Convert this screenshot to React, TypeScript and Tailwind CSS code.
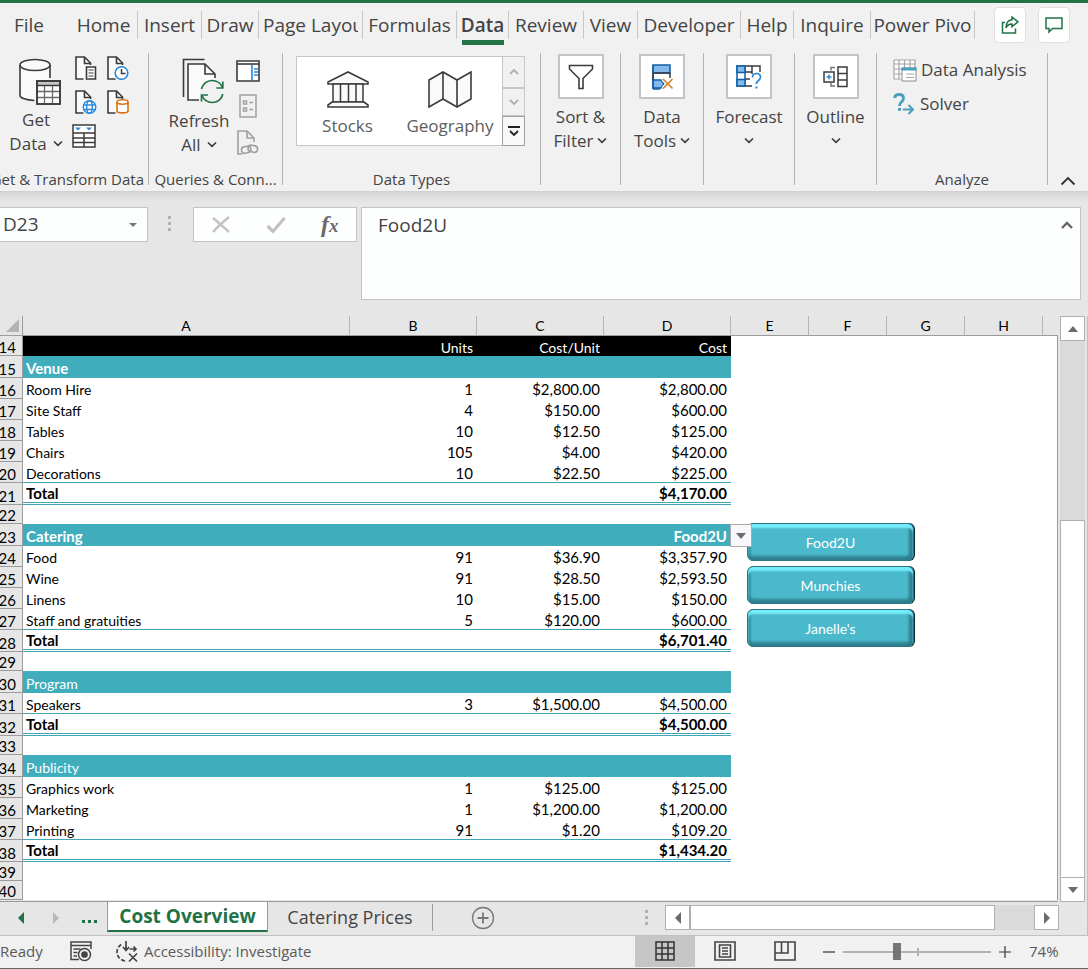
import type { ReactNode } from "react";

const INK = "#3b3b3b";
const BLUE = "#2b88d8";
const GREEN = "#217346";

/* ---------- icons ---------- */

function Chevron() {
  return (
    <svg width="10" height="8" viewBox="0 0 10 8" fill="none" stroke="#3b3b3b" strokeWidth="1.7" aria-hidden="true">
      <path d="M1 1.500l4 3.800 4-3.800" />
    </svg>
  );
}

function GetDataIcon() {
  return (
    <svg width="42" height="47" viewBox="0 0 42 47" fill="none" stroke={INK} strokeWidth="1.6" aria-hidden="true">
      <path d="M1 7v30c0 2.500 6 5 14 5.500H17V22H31V7z" fill="#fafafa" stroke="none" />
      <ellipse cx="16" cy="7" rx="15" ry="5.500" fill="#fafafa" />
      <path d="M1 7v30.500c0 2.500 6 4.800 14.500 5M31 7v13" />
      <path d="M18 23h23v23H18z" fill="#fff" />
      <path d="M18 23h23v4.500H18z" fill="#c8c6c4" />
      <path d="M18 33.500h23M18 39.500h23M25.500 28v18M33.500 28v18" stroke="#6b6965" strokeWidth="1.300" />
      <path d="M18 23h23v23H18z" />
    </svg>
  );
}

function DocBase({ color = INK }: { color?: string }) {
  return (
    <g stroke={color} strokeWidth="1.600" fill="none">
      <path d="M1 1h8l6 6v16H1z" fill="#fafafa" stroke="none" />
      <path d="M8.500 23H1V1h8.500l6 6v2" />
      <path d="M9.500 1v6.500h6.500" />
    </g>
  );
}

function DocText() {
  return (
    <svg width="22" height="24" viewBox="0 0 22 24" aria-hidden="true">
      <DocBase />
      <path d="M11.500 11h9v12h-9z" fill="#fff" stroke={INK} strokeWidth="1.600" />
      <path d="M13.500 14h5M13.500 17h5M13.500 20h5" stroke={INK} strokeWidth="1.200" />
    </svg>
  );
}

function DocClock() {
  return (
    <svg width="22" height="24" viewBox="0 0 22 24" aria-hidden="true">
      <DocBase />
      <circle cx="14.500" cy="17" r="6.300" fill="#fff" stroke={BLUE} strokeWidth="1.600" />
      <path d="M14.500 13v4.500h4" fill="none" stroke={INK} strokeWidth="1.500" />
    </svg>
  );
}

function DocGlobe() {
  return (
    <svg width="22" height="24" viewBox="0 0 22 24" aria-hidden="true">
      <DocBase />
      <g fill="none" stroke={BLUE} strokeWidth="1.400">
        <circle cx="14.500" cy="17" r="6.300" fill="#fff" />
        <ellipse cx="14.500" cy="17" rx="2.800" ry="6.300" />
        <path d="M8.500 15h12M8.500 19.500h12" />
      </g>
    </svg>
  );
}

function DocDatabase() {
  return (
    <svg width="22" height="24" viewBox="0 0 22 24" aria-hidden="true">
      <DocBase />
      <g fill="#fff" stroke="#d9730d" strokeWidth="1.600">
        <path d="M10 12v9c0 2.500 11 2.500 11 0v-9" />
        <ellipse cx="15.500" cy="12" rx="5.500" ry="2.200" />
      </g>
    </svg>
  );
}

function TableFilterIcon() {
  return (
    <svg width="24" height="24" viewBox="0 0 24 24" fill="none" stroke={INK} strokeWidth="1.500" aria-hidden="true">
      <path d="M1 1h22v22H1z" fill="#fff" />
      <path d="M1 9h22M1 14h22M1 18.500h22M12 9v14" />
      <path d="M3 3.500h6L6 6.500zM14 3.500h6l-3 3z" fill={BLUE} stroke="none" />
    </svg>
  );
}

function RefreshIcon() {
  return (
    <svg width="42" height="46" viewBox="0 0 42 46" fill="none" stroke={INK} strokeWidth="1.600" aria-hidden="true">
      <path d="M1.500 39V1.500h21" />
      <path d="M6 42V6h17l9.500 9.500V24L18 42z" fill="#fafafa" stroke="none" />
      <path d="M17 42H6V6h17l10 10v4" />
      <path d="M23 6v10h10" />
      <circle cx="30" cy="34" r="12.500" fill="#f1f1f1" stroke="none" />
      <g stroke={GREEN} strokeWidth="1.700">
        <path d="M19.500 31c1-5 5.500-8.500 10.500-8.500 4.500 0 8.500 2.500 10.500 7M40.800 36c-1 5-5.300 8.500-10.500 8.500-4.500 0-8.500-2.500-10.300-7" />
        <path d="M40.800 23.500v6.500h-6.500M19.500 43.500V37H26" />
      </g>
    </svg>
  );
}

function PaneIcon() {
  return (
    <svg width="24" height="22" viewBox="0 0 24 22" fill="none" stroke={INK} strokeWidth="1.600" aria-hidden="true">
      <path d="M1 1h22v20H1z" fill="#fff" />
      <path d="M1 4h22" />
      <path d="M16 5v15" stroke={BLUE} />
      <path d="M18 9h4M18 12h4M18 15h4" stroke={BLUE} strokeWidth="1.300" />
    </svg>
  );
}

function PropertiesIcon() {
  return (
    <svg width="18" height="24" viewBox="0 0 18 24" fill="none" stroke="#a0a0a0" strokeWidth="1.500" aria-hidden="true">
      <path d="M1 1h16v22H1z" />
      <path d="M4.500 7h3v3h-3zM4.500 14h3v3h-3zM10.500 8.500H14M10.500 15.500H14" />
    </svg>
  );
}

function LinkDocIcon() {
  return (
    <svg width="22" height="25" viewBox="0 0 22 25" fill="none" stroke="#a0a0a0" strokeWidth="1.600" aria-hidden="true">
      <path d="M5 24H1V1h9l7 7v4" />
      <path d="M10 1v7h7" />
      <rect x="4.500" y="16.500" width="9.500" height="6.500" rx="3.200" transform="rotate(-12 9 20)" />
      <rect x="11" y="15.500" width="9.500" height="6.500" rx="3.200" transform="rotate(12 16 19)" />
    </svg>
  );
}

function StocksIcon() {
  return (
    <svg width="42" height="37" viewBox="0 0 42 37" fill="#fafafa" stroke={INK} strokeWidth="1.600" aria-hidden="true">
      <path d="M1 13v-2L21 1l20 10v2z" />
      <path d="M6 13h30v18H6zM13.500 13v18M21.500 13v18M29 13v18" strokeWidth="1.500" />
      <path d="M1 36v-2l4-3h32l4 3v2z" />
    </svg>
  );
}

function MapIcon() {
  return (
    <svg width="44" height="37" viewBox="0 0 44 37" fill="#fafafa" stroke={INK} strokeWidth="1.600" aria-hidden="true">
      <path d="M1 9l14-8 14 8 14-8v27l-14 8-14-8-14 8z" />
      <path d="M15 1v27M29 9v27" />
    </svg>
  );
}

function FunnelIcon() {
  return (
    <svg width="26" height="26" viewBox="0 0 26 26" fill="#fff" stroke={INK} strokeWidth="1.600" aria-hidden="true">
      <path d="M1.500 1.500h23v3.500L15 14.500V24.500h-4V14.500L1.500 5z" />
    </svg>
  );
}

function DataToolsIcon() {
  return (
    <svg width="24" height="26" viewBox="0 0 24 26" fill="none" strokeWidth="1.500" aria-hidden="true">
      <path d="M3 1h17v8H3zM3 16h8l3 4-3 4H3z" fill="#83b9eb" stroke="#0f5ea8" />
      <path d="M3 1v24M3 25h7" stroke="#0f5ea8" />
      <path d="M3 9v7M20 9v5M3 9h17" stroke={INK} />
      <path d="M13 15l9.500 9.500M22.500 15L13 24.500" stroke="#fff" strokeWidth="4" />
      <path d="M13 15l9.500 9.500M22.500 15L13 24.500" stroke="#d9822b" strokeWidth="1.700" />
    </svg>
  );
}

function ForecastIcon() {
  return (
    <svg width="26" height="26" viewBox="0 0 26 26" fill="none" strokeWidth="1.500" aria-hidden="true">
      <path d="M9 2h15v6M9 8h7M9 15h5M9 22h7M16 2v8" stroke={INK} />
      <path d="M1 2h8v20H1z" fill="#fff" stroke="#0f5ea8" />
      <path d="M1 2h8v6.500H1zM1 15.500h8V22H1z" fill="#83b9eb" stroke="#0f5ea8" />
      <path d="M16.500 13.500c0-2.500 1.700-4 4-4s4 1.500 4 3.800c0 3.200-4.200 3.200-4.200 6.700" stroke={BLUE} strokeWidth="1.700" />
      <path d="M19.400 22.500h2v2h-2z" fill={BLUE} />
    </svg>
  );
}

function OutlineIcon() {
  return (
    <svg width="26" height="22" viewBox="0 0 26 22" fill="none" stroke={INK} strokeWidth="1.500" aria-hidden="true">
      <path d="M15 1h9v19.500h-9zM15 7.500h9M15 14h9" />
      <path d="M12 1.500H8v3M12 20H8v-3" stroke="#777" />
      <path d="M1 6h10v10H1z" />
      <path d="M6 8.500v5M3.500 11h5" stroke={BLUE} />
    </svg>
  );
}

function AnalysisIcon() {
  return (
    <svg width="24" height="23" viewBox="0 0 24 23" fill="none" aria-hidden="true">
      <path d="M1 1h21v19H1z" fill="#fff" />
      <path d="M1 1h21v8M1 1v19h7M1 5h21M1 10h8M1 15h8M6 1v19M11.500 1v8M17 1v8" stroke="#a5a5a5" strokeWidth="1.200" />
      <path d="M9 9h14v13H9z" fill="#fff" stroke="#8a8a8a" />
      <path d="M8.500 8.500h15v3h-15z" fill="#4a9fbd" />
      <path d="M13 15h8M13 18.500h8" stroke="#a5a5a5" />
    </svg>
  );
}

function SolverIcon() {
  return (
    <svg width="22" height="22" viewBox="0 0 22 22" fill="none" stroke="#4a9fbd" aria-hidden="true">
      <path d="M1.500 5c.4-2.300 2-3.500 4.500-3.500 2.800 0 4.500 1.400 4.500 3.700C10.500 9 6.500 8.500 6.500 13" strokeWidth="2.800" />
      <path d="M5 15h3v2.800H5z" fill="#4a9fbd" stroke="none" />
      <path d="M10 16.500h9M15.500 12l4.500 4.500-4.500 4.500" strokeWidth="2" />
    </svg>
  );
}

function Triangle({ dir, color = "#6b6b6b" }: { dir: "up" | "down" | "left" | "right"; color?: string }) {
  const d = {
    up: "M1 9l5-6 5 6z",
    down: "M1 3l5 6 5-6z",
    left: "M9 0v12L3 6z",
    right: "M3 0v12l6-6z",
  }[dir];
  return (
    <svg width="12" height="12" viewBox="0 0 12 12" fill={color} aria-hidden="true">
      <path d={d} />
    </svg>
  );
}

function Grip() {
  return (
    <span className="flex flex-col gap-[3px]" aria-hidden="true">
      <span className="size-[3px] bg-[#b0b0b0]" />
      <span className="size-[3px] bg-[#b0b0b0]" />
      <span className="size-[3px] bg-[#b0b0b0]" />
    </span>
  );
}

/* ---------- ribbon ---------- */

const tabs = [
  { name: "Insert", width: "w-[64px]" },
  { name: "Draw", width: "w-[57px]" },
  { name: "Page Layout", width: "w-[104px]" },
  { name: "Formulas", width: "w-[94px]" },
  { name: "Data", width: "w-[52px]" },
  { name: "Review", width: "w-[75px]" },
  { name: "View", width: "w-[54px]" },
  { name: "Developer", width: "w-[103px]" },
  { name: "Help", width: "w-[53px]" },
  { name: "Inquire", width: "w-[77px]" },
  { name: "Power Pivo", width: "w-[104px]" },
];

function TabItem({ name, width }: { name: string; width: string }) {
  const active = name === "Data";
  const clipped = name === "Page Layout";
  return (
    <div className={`${width} flex h-[42px] shrink-0 flex-col`}>
      <div className="mt-2 flex h-[28px] items-center justify-center border-r border-[#c8c6c4]">
        <button
          className={`whitespace-nowrap leading-7 ${active ? "font-semibold" : ""} ${
            clipped ? "ml-1 mr-1 flex-1 overflow-hidden text-left" : ""
          }`}
        >
          {name}
        </button>
      </div>
      {active && <span className="mx-[5px] mt-px h-[5px] bg-[#217346]" />}
    </div>
  );
}

function Group({ width, label, children }: { width: string; label?: string; children: ReactNode }) {
  return (
    <>
      <section className={`${width} flex h-[138px] shrink-0 flex-col`}>
        <div className="flex h-[116px] items-start">{children}</div>
        {label && <div className="flex justify-center whitespace-nowrap text-[15px] leading-5">{label}</div>}
      </section>
      <span className="h-[132px] w-px shrink-0 bg-[#b4b2b0]" />
    </>
  );
}

function MenuButton({ icon, top, bottom }: { icon: ReactNode; top: string; bottom?: string }) {
  return (
    <button className="flex flex-1 flex-col items-center leading-6">
      <span className="mb-[6px] mt-px flex h-[45px] w-[46px] items-center justify-center border-2 border-[#c4c4c4] bg-white">
        {icon}
      </span>
      <span>{top}</span>
      <span className="flex h-6 items-center gap-1">
        {bottom}
        <Chevron />
      </span>
    </button>
  );
}

function Ribbon() {
  return (
    <header className="border-b border-[#d0d0d0] bg-[#f1f1f1] text-[#444]">
      <div className="h-[3px] bg-[#217346]" />
      <nav className="flex h-[44px] text-[19px]">
        <div className="mt-2 h-[28px] w-[58px] text-center">
          <button className="leading-7">File</button>
        </div>
        <div className="ml-3 mt-2 h-[28px] w-[68px] border-r border-[#c8c6c4] text-center">
          <button className="leading-7">Home</button>
        </div>
        {tabs.map((t) => (
          <TabItem key={t.name} name={t.name} width={t.width} />
        ))}
        <div className="ml-auto mr-[18px] mt-1 flex gap-3">
          <button aria-label="Share" className="flex h-9 w-8 items-center justify-center rounded-sm border border-[#e0e0e0] bg-white">
            <svg width="18" height="18" viewBox="0 0 18 18" fill="none" stroke={GREEN} strokeWidth="1.500">
              <path d="M4 6.500H1.500V17h13v-4.500" />
              <path d="M11 1l6 4.800-6 4.800V8C8 8 6 9.500 5 12c0-5 2.500-8 6-8.300z" />
            </svg>
          </button>
          <button aria-label="Comments" className="flex h-9 w-8 items-center justify-center rounded-sm border border-[#e0e0e0] bg-white">
            <svg width="18" height="18" viewBox="0 0 18 18" fill="none" stroke={GREEN} strokeWidth="1.500">
              <path d="M1 2h16v10.500H7.500L4 16v-3.500H1z" />
            </svg>
          </button>
        </div>
      </nav>

      <div className="flex h-[144px] pt-[6px] text-[17px]">
        <section className="flex h-[138px] w-[148px] shrink-0 flex-col overflow-hidden">
          <div className="flex h-[116px]">
            <button className="flex w-[72px] flex-col items-center leading-6">
              <span className="mb-[3px] ml-2 mt-[5px]">
                <GetDataIcon />
              </span>
              <span>Get</span>
              <span className="flex items-center gap-[6px]">
                Data <Chevron />
              </span>
            </button>
            <div className="ml-[3px] mt-[3px] grid grid-cols-2 content-start gap-x-[10px] gap-y-[10px]">
              <button aria-label="From Text/CSV"><DocText /></button>
              <button aria-label="Recent Sources"><DocClock /></button>
              <button aria-label="From Web"><DocGlobe /></button>
              <button aria-label="Existing Connections"><DocDatabase /></button>
              <button aria-label="From Table/Range" className="-ml-[3px]"><TableFilterIcon /></button>
            </div>
          </div>
          <div className="flex justify-end whitespace-nowrap pr-1 text-[15px] leading-5">Get &amp; Transform Data</div>
        </section>
        <span className="h-[132px] w-px shrink-0 bg-[#b4b2b0]" />

        <Group width="w-[133px]" label="Queries & Conn...">
          <button className="ml-[14px] flex w-[72px] flex-col items-center leading-6">
            <span className="mb-[5px] mt-[5px] ml-2">
              <RefreshIcon />
            </span>
            <span>Refresh</span>
            <span className="flex items-center gap-[6px]">
              All <Chevron />
            </span>
          </button>
          <div className="mt-[7px] flex w-[26px] flex-col items-center gap-[12px]">
            <button aria-label="Queries and Connections"><PaneIcon /></button>
            <button aria-label="Properties"><PropertiesIcon /></button>
            <button aria-label="Edit Links"><LinkDocIcon /></button>
          </div>
        </Group>

        <Group width="w-[257px]" label="Data Types">
          <div className="ml-[13px] mt-[3px] flex h-[90px] border border-[#c8c6c4] bg-white text-[#5c5c5c]">
            <button className="flex w-[101px] flex-col items-center pt-[14px] leading-6">
              <StocksIcon />
              <span className="mt-[6px]">Stocks</span>
            </button>
            <button className="flex w-[104px] flex-col items-center pt-[14px] leading-6">
              <MapIcon />
              <span className="mt-[6px]">Geography</span>
            </button>
            <div className="-my-px -mr-px flex w-[23px] flex-col">
              <button aria-label="Scroll up" className="flex h-8 items-center justify-center border border-[#c8c6c4] bg-[#f1f1f1]">
                <svg width="10" height="8" viewBox="0 0 10 8" fill="none" stroke="#b0b0b0" strokeWidth="1.800"><path d="M1 6l4-4 4 4" /></svg>
              </button>
              <button aria-label="Scroll down" className="flex h-[29px] items-center justify-center border border-[#c8c6c4] bg-[#f1f1f1]">
                <svg width="10" height="8" viewBox="0 0 10 8" fill="none" stroke="#b0b0b0" strokeWidth="1.800"><path d="M1 2l4 4 4-4" /></svg>
              </button>
              <button aria-label="More data types" className="flex h-[30px] items-center justify-center border border-[#a0a0a0] bg-[#f8f8f8]">
                <svg width="12" height="12" viewBox="0 0 12 12" fill="none" stroke="#222" strokeWidth="1.800"><path d="M0 2h12M2 6l4 4 4-4" /></svg>
              </button>
            </div>
          </div>
        </Group>

        <Group width="w-[79px]">
          <MenuButton icon={<FunnelIcon />} top="Sort &" bottom="Filter" />
        </Group>
        <Group width="w-[82px]">
          <MenuButton icon={<DataToolsIcon />} top="Data" bottom="Tools" />
        </Group>
        <Group width="w-[90px]">
          <MenuButton icon={<ForecastIcon />} top="Forecast" />
        </Group>
        <Group width="w-[81px]">
          <MenuButton icon={<OutlineIcon />} top="Outline" />
        </Group>
        <Group width="w-[170px]" label="Analyze">
          <div className="ml-4 mt-1 flex flex-col gap-2">
            <button className="flex h-[26px] items-center gap-1 whitespace-nowrap"><AnalysisIcon />Data Analysis</button>
            <button className="flex h-[26px] items-center gap-[5px]"><SolverIcon />Solver</button>
          </div>
        </Group>
        <button aria-label="Collapse the ribbon" className="ml-auto mr-3 mt-[120px] h-4">
          <svg width="16" height="10" viewBox="0 0 16 10" fill="none" stroke="#333" strokeWidth="1.800"><path d="M1.500 8.500l6.500-6.500 6.500 6.500" /></svg>
        </button>
      </div>
    </header>
  );
}

/* ---------- formula bar ---------- */

function FormulaBar() {
  return (
    <div className="flex h-[124px] items-start bg-linear-to-b from-[#d6d6d6] to-[#e6e6e6] to-8% pr-[7px] pt-[15px] text-[#444]">
      <div className="flex h-[35px] w-[148px] shrink-0 items-center border border-l-0 border-[#c0c4c2] bg-[#fcfffe]">
        <input aria-label="Name box" defaultValue="D23" className="w-[124px] bg-transparent pl-[3px] text-[19px] outline-none" />
        <button aria-label="Choose a name">
          <svg width="20" height="6" viewBox="0 0 20 6" fill="#777"><path d="M5 1h8L9 5z" /></svg>
        </button>
      </div>
      <span className="ml-5 mt-[9px]"><Grip /></span>
      <div className="ml-[22px] flex h-[35px] w-[164px] shrink-0 items-center justify-around border border-[#c0c4c2] bg-[#fcfffe]">
        <button aria-label="Cancel">
          <svg width="20" height="18" viewBox="0 0 20 18" fill="none" stroke="#c2c2c2" strokeWidth="2.400"><path d="M2 2c5 4 10 9 16 14M18 1C12 6 6 11 2 16" /></svg>
        </button>
        <button aria-label="Enter">
          <svg width="20" height="18" viewBox="0 0 20 18" fill="none" stroke="#c2c2c2" strokeWidth="3.200"><path d="M1.500 10l5.500 5.500L18.500 2" /></svg>
        </button>
        <button aria-label="Insert function" className="font-['Liberation_Serif',serif] text-[24px] font-bold italic leading-7 text-[#6a6a6a]">
          f<span className="text-[19px]">x</span>
        </button>
      </div>
      <div className="ml-1 flex h-[93px] flex-1 items-start border border-[#c0c4c2] bg-[#fcfffe]">
        <textarea
          aria-label="Formula"
          defaultValue="Food2U"
          className="h-full flex-1 resize-none bg-transparent pl-4 pt-[3px] text-[19px] leading-7 outline-none"
        />
        <button aria-label="Collapse formula bar" className="mr-[7px] mt-[13px]">
          <svg width="12" height="8" viewBox="0 0 12 8" fill="none" stroke="#666" strokeWidth="2.400"><path d="M1 7l5-5 5 5" /></svg>
        </button>
      </div>
    </div>
  );
}

/* ---------- sheet ---------- */

type Row = {
  n: number;
  kind: "head" | "section" | "item" | "last" | "total" | "blank";
  cells?: string[];
  bold?: boolean;
};

const rows: Row[] = [
  { n: 14, kind: "head", cells: ["", "Units", "Cost/Unit", "Cost"] },
  { n: 15, kind: "section", cells: ["Venue", "", "", ""], bold: true },
  { n: 16, kind: "item", cells: ["Room Hire", "1", "$2,800.00", "$2,800.00"] },
  { n: 17, kind: "item", cells: ["Site Staff", "4", "$150.00", "$600.00"] },
  { n: 18, kind: "item", cells: ["Tables", "10", "$12.50", "$125.00"] },
  { n: 19, kind: "item", cells: ["Chairs", "105", "$4.00", "$420.00"] },
  { n: 20, kind: "last", cells: ["Decorations", "10", "$22.50", "$225.00"] },
  { n: 21, kind: "total", cells: ["Total", "", "", "$4,170.00"], bold: true },
  { n: 22, kind: "blank" },
  { n: 23, kind: "section", cells: ["Catering", "", "", "Food2U"], bold: true },
  { n: 24, kind: "item", cells: ["Food", "91", "$36.90", "$3,357.90"] },
  { n: 25, kind: "item", cells: ["Wine", "91", "$28.50", "$2,593.50"] },
  { n: 26, kind: "item", cells: ["Linens", "10", "$15.00", "$150.00"] },
  { n: 27, kind: "last", cells: ["Staff and gratuities", "5", "$120.00", "$600.00"] },
  { n: 28, kind: "total", cells: ["Total", "", "", "$6,701.40"], bold: true },
  { n: 29, kind: "blank" },
  { n: 30, kind: "section", cells: ["Program", "", "", ""] },
  { n: 31, kind: "last", cells: ["Speakers", "3", "$1,500.00", "$4,500.00"] },
  { n: 32, kind: "total", cells: ["Total", "", "", "$4,500.00"], bold: true },
  { n: 33, kind: "blank" },
  { n: 34, kind: "section", cells: ["Publicity", "", "", ""] },
  { n: 35, kind: "item", cells: ["Graphics work", "1", "$125.00", "$125.00"] },
  { n: 36, kind: "item", cells: ["Marketing", "1", "$1,200.00", "$1,200.00"] },
  { n: 37, kind: "last", cells: ["Printing", "91", "$1.20", "$109.20"] },
  { n: 38, kind: "total", cells: ["Total", "", "", "$1,434.20"], bold: true },
  { n: 39, kind: "blank" },
  { n: 40, kind: "blank" },
];

const rowHeight = {
  head: "h-[20px]",
  section: "h-[22px]",
  item: "h-[21px]",
  last: "h-[21px]",
  total: "h-[22px]",
  blank: "h-[19px]",
};

const cellLook = {
  head: "bg-black text-white pb-0",
  section: "bg-[#40adbd] text-white pb-px",
  item: "pb-px",
  last: "border-b border-[#40a5b5] pb-0",
  total: "border-b-3 border-double border-[#40a5b5] pb-0",
  blank: "pb-0",
};

function Sheet() {
  return (
    <div className="relative flex-1 overflow-hidden border-b border-[#9b9b9b] font-[Lato,sans-serif] text-[14px] text-black">
      <table className="w-full table-fixed border-separate border-spacing-0">
        <colgroup>
          <col className="w-[23px]" />
          <col className="w-[327px]" />
          <col className="w-[127px]" />
          <col className="w-[127px]" />
          <col className="w-[127px]" />
          <col className="w-[78px]" />
          <col className="w-[78px]" />
          <col className="w-[78px]" />
          <col className="w-[78px]" />
          <col />
        </colgroup>
        <thead className="bg-[#e6e6e6]">
          <tr className="h-[20px]">
            <th aria-label="Select all" className="border-b border-r border-[#9b9b9b] p-0">
              <svg className="ml-[6px]" width="13" height="13" viewBox="0 0 13 13" fill="#b4b4b4"><path d="M13 0v13H0z" /></svg>
            </th>
            {["A", "B", "C", "D", "E", "F", "G", "H"].map((c) => (
              <th key={c} scope="col" className="border-b border-r border-b-[#9b9b9b] border-r-[#b4b4b4] p-0 font-normal leading-[19px]">
                {c}
              </th>
            ))}
            <th className="border-b border-[#9b9b9b] p-0" />
          </tr>
        </thead>
        <tbody className="bg-white">
          {rows.map((r) => (
            <tr key={r.n} className={rowHeight[r.kind]}>
              <th scope="row" className="overflow-hidden border-b border-r border-[#9b9b9b] bg-[#e6e6e6] p-0 align-bottom font-normal">
                <div className="flex justify-end pr-[6px] text-[15px] leading-[15px]">{r.n}</div>
              </th>
              {(r.cells ?? ["", "", "", ""]).map((c, i) => (
                <td
                  key={i}
                  className={`pl-[3px] pr-1 pt-0 align-bottom leading-[17px] ${cellLook[r.kind]} ${
                    i === 0 ? "" : "text-right"
                  } ${r.bold || (i > 0 && r.kind !== "head") ? "text-[15px]" : ""} ${r.bold ? "font-bold" : ""}`}
                >
                  {c}
                </td>
              ))}
              <td colSpan={5} className="border-r border-[#9b9b9b] p-0" />
            </tr>
          ))}
        </tbody>
      </table>

      <div className="absolute left-[747px] top-[207px] flex w-[167px] flex-col gap-[5px]">
        {["Food2U", "Munchies", "Janelle's"].map((v) => (
          <button
            key={v}
            className="h-[38px] rounded-md border border-[#2c7684] bg-[#4ab9cc] text-[14px] text-white shadow-[inset_0_4px_2px_#74ecfb,inset_-4px_0_3px_#2c7c8b,inset_0_-4px_3px_#30808f,inset_3px_0_2px_#3598a9,1px_0_0_#0d2a30]"
          >
            {v}
          </button>
        ))}
      </div>
      <button aria-label="Show list of caterers" className="absolute left-[730px] top-[208px] flex h-[23px] w-[22px] items-center justify-center border border-[#aaa] bg-[#f8f8fc]">
        <Triangle dir="down" />
      </button>
    </div>
  );
}

function VerticalScroll() {
  return (
    <div className="mx-[2px] flex w-[25px] flex-col bg-[#dadada]">
      <button aria-label="Scroll rows up" className="flex h-[25px] items-center justify-center border border-[#b0b0b0] bg-white"><Triangle dir="up" /></button>
      <div className="flex flex-1 flex-col">
        <div className="flex-1" />
        <div className="basis-2/3 border border-b-0 border-[#b0b0b0] bg-white" />
      </div>
      <button aria-label="Scroll rows down" className="flex h-[25px] items-center justify-center border border-[#b0b0b0] bg-white"><Triangle dir="down" /></button>
    </div>
  );
}

/* ---------- bottom bars ---------- */

function SheetTabs() {
  return (
    <div className="flex h-[34px] items-start border-b border-r border-[#c0c0c0] bg-[#e6e6e6] text-[19px] text-[#444]">
      <div className="flex h-[31px] w-[107px] shrink-0 items-center">
        <button aria-label="Previous sheet" className="ml-[15px]"><Triangle dir="left" color={GREEN} /></button>
        <button aria-label="Next sheet" className="ml-[23px]"><Triangle dir="right" color="#b8b8b8" /></button>
        <button aria-label="More sheets" className="ml-5 mt-2 flex gap-[3px]">
          <span className="size-[3px] bg-[#217346]" />
          <span className="size-[3px] bg-[#217346]" />
          <span className="size-[3px] bg-[#217346]" />
        </button>
      </div>
      <button className="-mt-px h-[31px] w-[161px] shrink-0 whitespace-nowrap border-x border-b-2 border-x-[#9b9b9b] border-b-[#217346] bg-white text-[19px] font-bold leading-7 text-[#217346]">
        Cost Overview
      </button>
      <button className="mt-[2px] h-[27px] w-[165px] shrink-0 border-r border-[#9b9b9b] pb-[2px] text-[18px] leading-6">Catering Prices</button>
      <button aria-label="New sheet" className="ml-[38px] mt-1">
        <svg width="24" height="24" viewBox="0 0 24 24" fill="none" stroke="#777" strokeWidth="1.300"><circle cx="12" cy="12" r="10.500" /><path d="M12 6.500v11M6.500 12h11" strokeWidth="1.800" /></svg>
      </button>
      <span className="ml-auto mt-2"><Grip /></span>
      <div className="ml-[17px] mr-[28px] mt-[3px] flex h-[25px] w-[394px] shrink-0 bg-[#dadada]">
        <button aria-label="Scroll left" className="flex w-[25px] items-center justify-center border border-[#b0b0b0] bg-white"><Triangle dir="left" /></button>
        <div className="w-[305px] border border-[#b0b0b0] bg-white" />
        <button aria-label="Scroll right" className="ml-auto flex w-[25px] items-center justify-center border border-[#b0b0b0] bg-white"><Triangle dir="right" /></button>
      </div>
    </div>
  );
}

function StatusBar() {
  return (
    <footer className="flex h-[33px] items-center border-b border-[#666] bg-[#f1f1f1] pb-px text-[15px] text-[#5a5a5a]">
      <span className="w-[70px]">Ready</span>
      <button aria-label="Record macro">
        <svg width="22" height="21" viewBox="0 0 22 21" fill="none" stroke="#444" strokeWidth="1.500">
          <path d="M9 18.500H1V1h20v7M1 4.500h20M3.500 8h7M3.500 11.500h4M3.500 15h3.500" />
          <circle cx="14.500" cy="13.500" r="6" fill="#f1f1f1" />
          <circle cx="14.500" cy="13.500" r="2.600" fill="#444" />
        </svg>
      </button>
      <button className="ml-[23px] flex items-center gap-[5px]">
        <svg width="24" height="22" viewBox="0 0 24 22" fill="none" stroke="#444" strokeWidth="1.700">
          <path d="M10 20C5 19 2 15.500 2 11c0-4 2.500-7 6-8.500" strokeDasharray="4 2" />
          <path d="M11 0v9M8 6l3 3.500L14 6M14.500 8H21M18.500 5.500L21 8l-2.500 2.500M14 12.500l8 8M22 12.500l-8 8" />
        </svg>
        Accessibility: Investigate
      </button>
      <div className="ml-auto flex h-full">
        <button aria-label="Normal view" className="flex w-[60px] justify-center bg-[#c6c6c6] pt-[5px]">
          <svg width="20" height="20" viewBox="0 0 20 20" fill="none" stroke="#333" strokeWidth="1.500"><path d="M1 1h18v18H1zM7 1v18M13 1v18M1 7h18M1 13h18" /></svg>
        </button>
        <button aria-label="Page layout view" className="flex w-[60px] justify-center pt-[5px]">
          <svg width="22" height="20" viewBox="0 0 22 20" fill="none" stroke="#444" strokeWidth="1.600"><path d="M1 1h20v18H1zM5.500 4h11v12h-11zM8 7h6M8 10h6M8 13h6" /></svg>
        </button>
        <button aria-label="Page break preview" className="flex w-[60px] justify-center pt-[5px]">
          <svg width="22" height="20" viewBox="0 0 22 20" fill="none" stroke="#444" strokeWidth="1.600"><path d="M1 1h20v18H1zM1 12h13V1M7.500 1v11" /></svg>
        </button>
      </div>
      <button aria-label="Zoom out" className="ml-2">
        <svg width="12" height="12" viewBox="0 0 12 12" stroke="#333" strokeWidth="1.200"><path d="M0 6h12" /></svg>
      </button>
      <div className="relative ml-2 flex h-5 w-[148px] items-center">
        <span className="absolute left-[74px] top-[6px] h-2 w-[2px] bg-[#b0b0b0]" />
        <input
          type="range"
          aria-label="Zoom"
          min={0}
          max={100}
          defaultValue={36}
          className="relative h-[2px] w-full appearance-none bg-[#b0b0b0] [&::-webkit-slider-thumb]:h-[17px] [&::-webkit-slider-thumb]:w-2 [&::-webkit-slider-thumb]:appearance-none [&::-webkit-slider-thumb]:bg-[#777672]"
        />
      </div>
      <button aria-label="Zoom in" className="ml-2">
        <svg width="12" height="12" viewBox="0 0 12 12" stroke="#333" strokeWidth="1.200"><path d="M0 6h12M6 0v12" /></svg>
      </button>
      <span className="ml-[18px] w-[59px]">74%</span>
    </footer>
  );
}

export default function App() {
  return (
    <div className="overflow-hidden bg-[#e6e6e6] font-['Open_Sans','Noto_Sans',sans-serif]">
      <Ribbon />
      <FormulaBar />
      <main className="flex h-[586px] border-r border-[#c0c0c0]">
        <Sheet />
        <VerticalScroll />
      </main>
      <SheetTabs />
      <StatusBar />
    </div>
  );
}
